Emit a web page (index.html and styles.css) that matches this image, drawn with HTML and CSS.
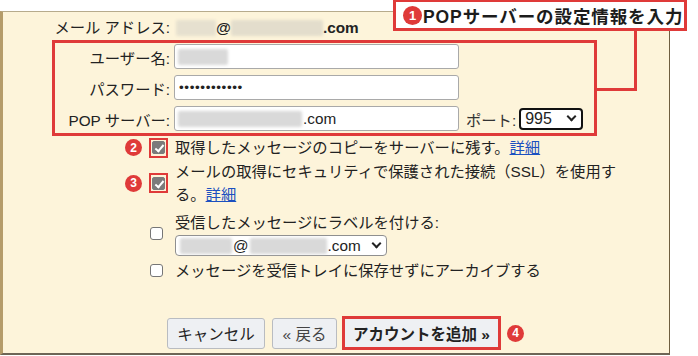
FILE: index.html
```html
<!DOCTYPE html>
<html>
<head>
  <meta charset="utf-8">
  <title>メールアカウントの追加</title>
  <link rel="stylesheet" href="styles.css">
</head>
<body>
  <div class="panel">
    <div class="addr">
      <span class="addr-label">メール アドレス:</span>
      <span class="addr-value"><span class="blur b40"></span>@<span class="blur b92"></span>.com</span>
    </div>

    <div class="group">
      <div class="field">
        <label class="field-label">ユーザー名:</label>
        <div class="input"><span class="blur b50"></span></div>
      </div>
      <div class="field">
        <label class="field-label">パスワード:</label>
        <div class="input dots">••••••••••••</div>
      </div>
      <div class="field">
        <label class="field-label">POP サーバー:</label>
        <div class="input"><span class="blur b124"></span>.com</div>
        <span class="port-label">ポート:</span>
        <div class="select port">995<span class="chev"></span></div>
      </div>
    </div>

    <div class="opt first">
      <div class="mark"><span class="num">2</span><span class="hl"><span class="cb on"></span></span></div>
      <div class="opt-text">取得したメッセージのコピーをサーバーに残す。<a href="#">詳細</a></div>
    </div>
    <div class="opt second">
      <div class="mark"><span class="num">3</span><span class="hl"><span class="cb on"></span></span></div>
      <div class="opt-text">メールの取得にセキュリティで保護された接続（SSL）を使用す<br>る。<a href="#">詳細</a></div>
    </div>
    <div class="opt third">
      <div class="mark plain"><span class="cb"></span></div>
      <div class="opt-text">
        受信したメッセージにラベルを付ける:
        <div class="select label-select"><span class="blur b52"></span>@<span class="blur b77"></span>.com<span class="chev"></span></div>
      </div>
    </div>
    <div class="opt fourth">
      <div class="mark plain"><span class="cb"></span></div>
      <div class="opt-text">メッセージを受信トレイに保存せずにアーカイブする</div>
    </div>

    <div class="actions">
      <button class="btn cancel">キャンセル</button>
      <button class="btn back">« 戻る</button>
      <button class="btn primary">アカウントを追加 »</button>
      <span class="num">4</span>
    </div>
  </div>

  <div class="callout"><span class="num big">1</span>POPサーバーの設定情報を入力</div>
  <div class="leader"></div>
</body>
</html>
```

FILE: styles.css
```css
* { box-sizing: border-box; }
body { margin: 0; background: #fff; overflow: hidden; font-family: "Liberation Sans", "Noto Sans CJK JP", sans-serif; font-size: 15.3px; color: #222; }

.panel { margin-top: 11px; width: 670px; height: 344px; background: #fdf4da; border-top: 1px solid #b7ab8c; border-left: 3px solid #b59c6a; border-right: 1px solid #6f5e40; border-bottom: 2px solid #6d6556; padding-top: 4px; }

.addr { display: flex; height: 23px; line-height: 23px; }
.addr-label { width: 167px; text-align: right; white-space: nowrap; }
.addr-value { margin-left: 6px; font-weight: bold; display: flex; align-items: center; }

.blur { display: inline-block; height: 16px; background: #d9d9d9; filter: blur(1.5px); border-radius: 2px; }
.b40 { width: 40px; background: #e6e0cf; }
.b92 { width: 92px; background: #e3ddcc; }
.b50 { width: 50px; }
.b124 { width: 124px; }
.b52 { width: 52px; }
.b77 { width: 77px; }

.group { margin: 1px 0 0 49px; width: 545px; border: 3px solid #df3a39; padding: 1px 0 2px; display: flex; flex-direction: column; gap: 6px; }
.field { display: flex; align-items: center; height: 25px; }
.field-label { width: 115px; text-align: right; white-space: nowrap; }
.input { margin-left: 4px; width: 285px; height: 25px; background: #fff; border: 1px solid #a9a9a9; border-radius: 3px; padding-left: 3px; display: flex; align-items: center; gap: 1px; }
.dots { font-size: 13.5px; letter-spacing: 0.6px; padding-left: 4px; }
.port-label { margin-left: 7px; white-space: nowrap; color: #333; }
.select { display: flex; align-items: center; background: #fff; border-radius: 4px; }
.port { margin-left: 3px; width: 64px; height: 22px; border: 2px solid #111; padding-left: 4px; font-size: 16px; }
.chev { margin-left: auto; margin-right: 6px; width: 7px; height: 7px; border-right: 2px solid #222; border-bottom: 2px solid #222; transform: translateY(-2px) rotate(45deg); }

.opt { display: flex; align-items: center; line-height: 23px; }
.opt.second { margin-top: 1px; }
.opt.third { margin-top: 5px; }
.opt.fourth { margin-top: 3px; }
.mark { width: 172px; display: flex; justify-content: flex-end; align-items: center; padding-right: 7px; gap: 7px; }
.mark.plain { padding-right: 12px; }
.opt-text { white-space: nowrap; }
.opt-text a { color: #1b50c0; }

.hl { width: 19px; height: 20px; border: 2px solid #df3a39; display: flex; align-items: center; justify-content: center; }
.cb { display: inline-block; width: 13px; height: 13px; border: 1px solid #767676; border-radius: 3px; background: #fff; position: relative; }
.cb.on { width: 13px; height: 13px; background: #7b7b7b; border-color: #7b7b7b; border-radius: 2px; }
.cb.on::after { content: ""; position: absolute; left: 4px; top: 1px; width: 3px; height: 7px; border-right: 2px solid #fff; border-bottom: 2px solid #fff; transform: rotate(40deg); }

.label-select { margin-top: 1px; width: 212px; height: 21px; border: 1px solid #8f8f8f; padding-left: 4px; gap: 1px; line-height: 19px; }

.num { display: inline-flex; align-items: center; justify-content: center; width: 17px; height: 17px; border-radius: 50%; background: #df3a39; color: #fff; font-family: "Liberation Sans", sans-serif; font-weight: bold; font-size: 12px; line-height: 1; }

.actions { display: flex; align-items: center; margin-top: 34px; padding-left: 164px; }
.btn { height: 31px; font: inherit; font-size: 15.5px; color: #222; background: #eef0f3; border: 1px solid #b9bcc1; border-radius: 3px; padding: 0; }
.cancel { width: 98px; }
.back { width: 65px; margin-left: 7px; color: #444; }
.primary { width: 159px; height: 34px; margin-left: 5px; font-weight: bold; border: 3px solid #df3a39; border-radius: 0; }
.actions .num { margin-left: 6px; }

.callout { position: absolute; left: 393px; top: 0; width: 294px; height: 31px; background: #fff; border: 3px solid #df3a39; border-top-width: 2px; display: flex; align-items: center; padding-left: 7px; font-weight: bold; font-size: 17.5px; letter-spacing: 0.9px; color: #1c1c1c; white-space: nowrap; }
.num.big { width: 19px; height: 19px; font-size: 13px; margin-right: 1px; letter-spacing: 0; }
.leader { position: absolute; left: 597px; top: 31px; width: 40px; height: 60px; border-right: 3px solid #df3a39; border-bottom: 3px solid #df3a39; }
```
